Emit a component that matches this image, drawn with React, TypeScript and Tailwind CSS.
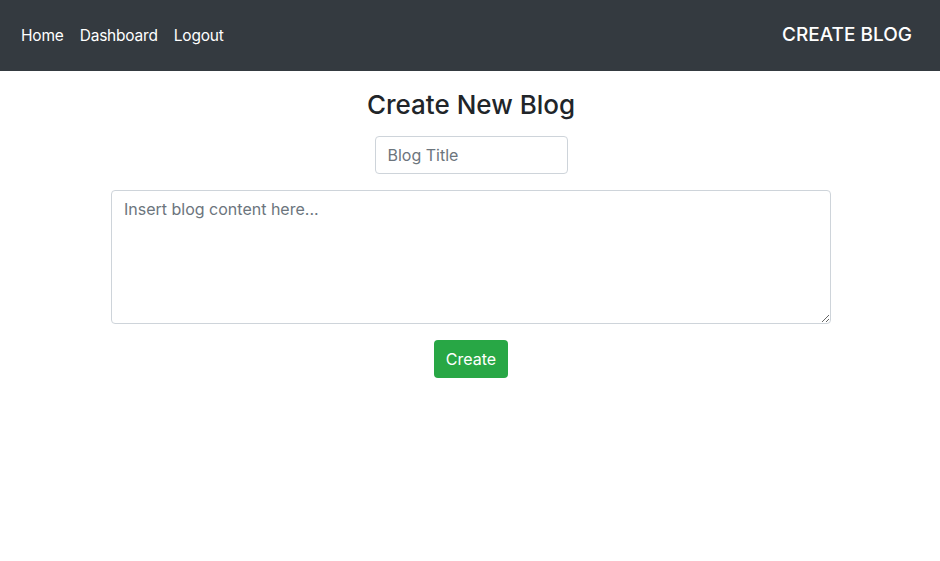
import React from 'react';

const NavLink: React.FC<{ label: string }> = ({ label }) => (
  <a href="#" onClick={(e) => e.preventDefault()} className="text-white text-[15.5px] leading-6 tracking-[-0.2px]">
    {label}
  </a>
);

export default function App() {
  return (
    <div className="min-h-[561px] bg-white font-['Inter',sans-serif] text-[#212529]">
      <nav className="h-[71px] bg-[#343a40] flex items-center justify-between pl-[21px] pr-[28px]">
        <div className="flex items-center gap-4">
          <NavLink label="Home" />
          <NavLink label="Dashboard" />
          <NavLink label="Logout" />
        </div>
        <span className="text-white text-[19px] font-medium">CREATE BLOG</span>
      </nav>

      <div className="flex flex-col items-center pl-[2px]">
        <h2 className="mt-[18px] text-[26px] leading-[32px] font-medium">Create New Blog</h2>
        <input
          type="text"
          placeholder="Blog Title"
          className="mt-[15px] w-[193px] h-[38px] px-3 text-[16px] border border-[#ced4da] rounded-[4px] placeholder:text-[#6c757d] outline-none"
        />
        <textarea
          placeholder="Insert blog content here..."
          className="mt-[16px] w-[720px] h-[134px] px-3 py-[6px] text-[16px] leading-6 border border-[#ced4da] rounded-[4px] placeholder:text-[#6c757d] outline-none"
        />
        <button className="mt-[16px] w-[74px] h-[38px] bg-[#28a745] text-white text-[16px] rounded-[4px]">
          Create
        </button>
      </div>
    </div>
  );
}
